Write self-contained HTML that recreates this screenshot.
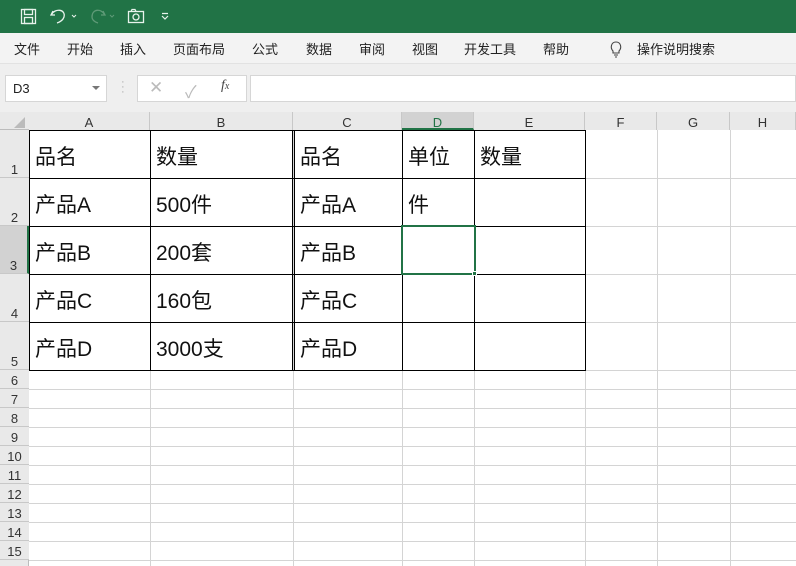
<!DOCTYPE html>
<html><head><meta charset="utf-8"><style>
*{margin:0;padding:0;box-sizing:border-box}
body{width:796px;height:566px;overflow:hidden;background:#fff;font-family:"Liberation Sans","Noto Sans CJK SC",sans-serif;position:relative}
.a{position:absolute}
.menu span{position:absolute;top:39px;font-size:13px;color:#222}
.ch{position:absolute;top:112px;height:18px;font-size:13px;color:#333;text-align:center;line-height:21px;border-right:1px solid #c8c8c8;background:#e9e9e9}
.rh{position:absolute;left:0;width:29px;font-size:13px;color:#333;text-align:center;background:#e9e9e9;border-bottom:1px solid #c8c8c8}
.vl{position:absolute;width:1px;background:#d4d4d4;top:130px;height:436px}
.hl{position:absolute;height:1px;background:#d4d4d4;left:29px;width:767px}
.bv{position:absolute;width:1px;background:#000;top:130px;height:241px}
.bh{position:absolute;height:1px;background:#000;left:29px;width:557px}
.t{position:absolute;font-size:21px;color:#111;line-height:48px;height:48px;margin-top:3px}
</style></head><body>
<div class="a" style="left:0;top:0;width:796px;height:33px;background:#217346"></div>
<svg class="a" style="left:0;top:0" width="180" height="33" fill="none" stroke="#e8f3ec" stroke-width="1.3">
<rect x="21.5" y="9.5" width="14" height="14"/><rect x="24.5" y="9.5" width="8" height="5"/><rect x="24.5" y="17.5" width="8" height="6"/>
<path d="M53 11 L51 15 L55 15 M51.5 14.5 C55 8 66 9 64 17 C63 20 60 22 57 23"/>
<path d="M72 15 l2 2 l2 -2" stroke-width="1"/>
<path d="M103 11 L105 15 L101 15 M104.5 14.5 C101 8 92 9 92 17 C92 20 95 22 98 23" stroke="#5f9a77"/>
<path d="M110 15 l2 2 l2 -2" stroke="#5f9a77" stroke-width="1"/>
<rect x="128.5" y="11.5" width="15" height="11"/><circle cx="136" cy="17" r="3"/><path d="M131 11.5 l1-2 h3 l1 2"/>
<path d="M162 13.5 h6 M162 16 l3 3 l3-3" stroke-width="1.2"/>
</svg>
<div class="a menu" style="left:0;top:33px;width:796px;height:30px;background:#f3f3f3"></div>
<div class="menu">
<span style="left:14px">文件</span><span style="left:67px">开始</span><span style="left:120px">插入</span><span style="left:173px">页面布局</span><span style="left:252px">公式</span><span style="left:306px">数据</span><span style="left:359px">审阅</span><span style="left:412px">视图</span><span style="left:464px">开发工具</span><span style="left:543px">帮助</span><span style="left:637px">操作说明搜索</span>
</div>
<svg class="a" style="left:608px;top:40px" width="16" height="18" fill="none" stroke="#444" stroke-width="1.1"><path d="M5 11 C2 8 3 2 8 2 C13 2 14 8 11 11 L11 13 H5 Z M6 15 H10 M7 17 H9"/></svg>
<div class="a" style="left:0;top:63px;width:796px;height:49px;background:#efefef;border-top:1px solid #e2e2e2"></div>
<div class="a" style="left:5px;top:75px;width:102px;height:27px;background:#fff;border:1px solid #d6d6d6;font-size:13px;line-height:26px;padding-left:7px;color:#222">D3</div>
<div class="a" style="left:92px;top:86px;width:0;height:0;border-left:4px solid transparent;border-right:4px solid transparent;border-top:4px solid #777"></div>
<div class="a" style="left:121px;top:80px;font-size:11px;color:#aaa;line-height:5px">·<br>·<br>·</div>
<div class="a" style="left:137px;top:75px;width:110px;height:27px;background:#fff;border:1px solid #d6d6d6"></div>
<div class="a" style="left:149px;top:78px;font-size:17px;color:#bbb">✕</div>
<div class="a" style="left:185px;top:78px;font-size:17px;color:#bbb">✓</div>
<div class="a" style="left:221px;top:78px;font-size:14px;color:#444;font-style:italic;font-family:'Liberation Serif',serif">f<span style="font-size:10px">x</span></div>
<div class="a" style="left:250px;top:75px;width:546px;height:27px;background:#fff;border:1px solid #d6d6d6"></div>
<div class="a" style="left:0;top:112px;width:796px;height:18px;background:#e9e9e9;border-bottom:1px solid #bcbcbc"></div>
<div class="a" style="left:14px;top:117px;width:0;height:0;border-left:11px solid transparent;border-bottom:11px solid #bbb"></div>
<div class="ch" style="left:29px;width:121px">A</div>
<div class="ch" style="left:150px;width:143px">B</div>
<div class="ch" style="left:293px;width:109px">C</div>
<div class="ch" style="left:402px;width:72px;background:#d2d2d2;color:#217346;border-bottom:2px solid #217346">D</div>
<div class="ch" style="left:474px;width:111px">E</div>
<div class="ch" style="left:585px;width:72px">F</div>
<div class="ch" style="left:657px;width:73px">G</div>
<div class="ch" style="left:730px;width:66px">H</div>
<div class="a" style="left:0;top:130px;width:29px;height:436px;background:#e9e9e9;border-right:1px solid #bcbcbc"></div>
<div class="rh" style="top:130px;height:48px;line-height:80px">1</div>
<div class="rh" style="top:178px;height:48px;line-height:80px">2</div>
<div class="rh" style="top:226px;height:48px;line-height:80px;background:#d2d2d2;border-right:2px solid #217346">3</div>
<div class="rh" style="top:274px;height:48px;line-height:80px">4</div>
<div class="rh" style="top:322px;height:48px;line-height:80px">5</div>
<div class="rh" style="top:370px;height:19px;line-height:21px">6</div>
<div class="rh" style="top:389px;height:19px;line-height:21px">7</div>
<div class="rh" style="top:408px;height:19px;line-height:21px">8</div>
<div class="rh" style="top:427px;height:19px;line-height:21px">9</div>
<div class="rh" style="top:446px;height:19px;line-height:21px">10</div>
<div class="rh" style="top:465px;height:19px;line-height:21px">11</div>
<div class="rh" style="top:484px;height:19px;line-height:21px">12</div>
<div class="rh" style="top:503px;height:19px;line-height:21px">13</div>
<div class="rh" style="top:522px;height:19px;line-height:21px">14</div>
<div class="rh" style="top:541px;height:19px;line-height:21px">15</div>
<div class="vl" style="left:150px"></div><div class="vl" style="left:293px"></div><div class="vl" style="left:402px"></div><div class="vl" style="left:474px"></div><div class="vl" style="left:585px"></div><div class="vl" style="left:657px"></div><div class="vl" style="left:730px"></div>
<div class="hl" style="top:178px"></div><div class="hl" style="top:226px"></div><div class="hl" style="top:274px"></div><div class="hl" style="top:322px"></div><div class="hl" style="top:370px"></div><div class="hl" style="top:389px"></div><div class="hl" style="top:408px"></div><div class="hl" style="top:427px"></div><div class="hl" style="top:446px"></div><div class="hl" style="top:465px"></div><div class="hl" style="top:484px"></div><div class="hl" style="top:503px"></div><div class="hl" style="top:522px"></div><div class="hl" style="top:541px"></div><div class="hl" style="top:560px"></div>
<div class="bv" style="left:29px"></div><div class="bv" style="left:150px"></div><div class="bv" style="left:292px"></div><div class="bv" style="left:294px"></div><div class="bv" style="left:402px"></div><div class="bv" style="left:474px"></div><div class="bv" style="left:585px"></div>
<div class="bh" style="top:130px"></div><div class="bh" style="top:178px"></div><div class="bh" style="top:226px"></div><div class="bh" style="top:274px"></div><div class="bh" style="top:322px"></div><div class="bh" style="top:370px"></div>
<div class="t" style="left:35px;top:131px">品名</div><div class="t" style="left:156px;top:131px">数量</div><div class="t" style="left:300px;top:131px">品名</div><div class="t" style="left:408px;top:131px">单位</div><div class="t" style="left:480px;top:131px">数量</div>
<div class="t" style="left:35px;top:179px">产品A</div><div class="t" style="left:156px;top:179px">500件</div><div class="t" style="left:300px;top:179px">产品A</div><div class="t" style="left:408px;top:179px">件</div>
<div class="t" style="left:35px;top:227px">产品B</div><div class="t" style="left:156px;top:227px">200套</div><div class="t" style="left:300px;top:227px">产品B</div>
<div class="t" style="left:35px;top:275px">产品C</div><div class="t" style="left:156px;top:275px">160包</div><div class="t" style="left:300px;top:275px">产品C</div>
<div class="t" style="left:35px;top:323px">产品D</div><div class="t" style="left:156px;top:323px">3000支</div><div class="t" style="left:300px;top:323px">产品D</div>
<div class="a" style="left:401px;top:225px;width:75px;height:50px;border:2px solid #217346"></div>
<div class="a" style="left:472px;top:271px;width:5px;height:5px;background:#217346;border:1px solid #fff"></div>
</body></html>
